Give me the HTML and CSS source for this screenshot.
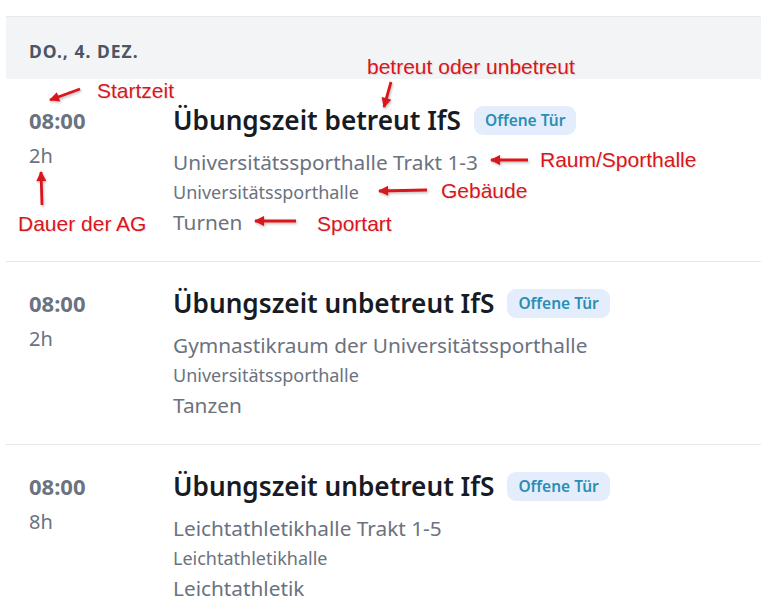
FILE: index.html
```html
<!DOCTYPE html>
<html lang="de">
<head>
<meta charset="utf-8">
<title>Termine</title>
<link rel="stylesheet" href="styles.css">
</head>
<body>
<div class="page">
  <section class="day">
    <div class="day-header">DO., 4. DEZ.</div>

    <div class="event">
      <div class="time-col">
        <div class="time">08:00</div>
        <div class="duration">2h</div>
      </div>
      <div class="info">
        <div class="title-row">
          <h2 class="title">Übungszeit betreut IfS</h2>
          <span class="badge">Offene Tür</span>
        </div>
        <div class="room">Universitätssporthalle Trakt 1-3</div>
        <div class="building">Universitätssporthalle</div>
        <div class="sport">Turnen</div>
      </div>
    </div>

    <div class="event">
      <div class="time-col">
        <div class="time">08:00</div>
        <div class="duration">2h</div>
      </div>
      <div class="info">
        <div class="title-row">
          <h2 class="title">Übungszeit unbetreut IfS</h2>
          <span class="badge">Offene Tür</span>
        </div>
        <div class="room">Gymnastikraum der Universitätssporthalle</div>
        <div class="building">Universitätssporthalle</div>
        <div class="sport">Tanzen</div>
      </div>
    </div>

    <div class="event">
      <div class="time-col">
        <div class="time">08:00</div>
        <div class="duration">8h</div>
      </div>
      <div class="info">
        <div class="title-row">
          <h2 class="title">Übungszeit unbetreut IfS</h2>
          <span class="badge">Offene Tür</span>
        </div>
        <div class="room">Leichtathletikhalle Trakt 1-5</div>
        <div class="building">Leichtathletikhalle</div>
        <div class="sport">Leichtathletik</div>
      </div>
    </div>
  </section>

  <div class="notes">
    <svg class="arrows" width="761" height="611" viewBox="0 0 761 611">
      <defs>
        <marker id="head" viewBox="0 0 10 10" refX="9" refY="5" markerWidth="4" markerHeight="3.6" orient="auto-start-reverse" markerUnits="strokeWidth">
          <path d="M0 0 L10 5 L0 10 Z" fill="#d9161c"/>
        </marker>
        <filter id="sh" x="-20%" y="-20%" width="140%" height="140%">
          <feDropShadow dx="1" dy="1.5" stdDeviation="1" flood-color="#000" flood-opacity="0.25"/>
        </filter>
      </defs>
      <g stroke="#d9161c" stroke-width="2.8" fill="none" marker-end="url(#head)" filter="url(#sh)">
        <line x1="80" y1="89" x2="50" y2="100"/>
        <line x1="391" y1="82" x2="384" y2="107"/>
        <line x1="528" y1="160" x2="491" y2="160"/>
        <line x1="427" y1="190" x2="379" y2="191"/>
        <line x1="296" y1="221" x2="255" y2="221"/>
        <line x1="42" y1="205" x2="41" y2="172"/>
      </g>
    </svg>
    <span class="note note-start">Startzeit</span>
    <span class="note note-betreut">betreut oder unbetreut</span>
    <span class="note note-raum">Raum/Sporthalle</span>
    <span class="note note-gebaeude">Gebäude</span>
    <span class="note note-sportart">Sportart</span>
    <span class="note note-dauer">Dauer der AG</span>
  </div>
</div>
</body>
</html>
```
FILE: styles.css
```css
* { box-sizing: border-box; }

html, body {
  margin: 0;
  padding: 0;
  background: #ffffff;
}

body {
  font-family: "Noto Sans", "Open Sans", sans-serif;
  color: #111827;
}

.page {
  position: relative;
  width: 761px;
  height: 611px;
  overflow: hidden;
  padding-top: 16px;
}

.day {
  margin-left: 6px;
}

.day-header {
  height: 63px;
  background: #f3f4f6;
  border-top: 1px solid #e8e9ec;
  padding: 23px 0 0 23px;
  font-size: 17.5px;
  line-height: 22px;
  font-weight: 700;
  letter-spacing: 1px;
  color: #4b5563;
}

.event {
  display: grid;
  grid-template-columns: 144px 1fr;
  height: 183px;
  padding: 26px 0 0 23px;
  border-bottom: 1px solid #e5e7eb;
}

.time {
  font-size: 22px;
  line-height: 30px;
  font-weight: 700;
  color: #6b7280;
}

.duration {
  margin-top: 6px;
  font-size: 20px;
  line-height: 30px;
  color: #6b7280;
}

.title-row {
  display: flex;
  align-items: center;
  gap: 13px;
  height: 30px;
}

.title {
  margin: 0;
  font-size: 26.2px;
  line-height: 30px;
  font-weight: 600;
  color: #161b24;
  white-space: nowrap;
}

.badge {
  display: inline-flex;
  align-items: center;
  height: 29px;
  padding: 0 11px;
  border-radius: 9px;
  background: #e4edfb;
  color: #2a8db5;
  font-size: 15.5px;
  font-weight: 600;
}

.room {
  margin-top: 12px;
  font-size: 20.8px;
  line-height: 30px;
  color: #6b7280;
}

.building {
  font-size: 18px;
  line-height: 30px;
  color: #6b7280;
}

.sport {
  font-size: 20.8px;
  line-height: 30px;
  color: #6b7280;
}

.notes {
  position: absolute;
  inset: 0;
  pointer-events: none;
}

.arrows {
  position: absolute;
  left: 0;
  top: 0;
}

.note {
  position: absolute;
  font-family: "Liberation Sans", Arial, sans-serif;
  font-size: 21px;
  line-height: 24px;
  color: #d9161c;
  white-space: nowrap;
  text-shadow: 1px 1px 1px rgba(0, 0, 0, 0.12);
}

.note-start { left: 97px; top: 79px; }
.note-betreut { left: 367px; top: 55px; }
.note-raum { left: 540px; top: 148px; }
.note-gebaeude { left: 441px; top: 179px; }
.note-sportart { left: 317px; top: 212px; }
.note-dauer { left: 18px; top: 212px; }
```
